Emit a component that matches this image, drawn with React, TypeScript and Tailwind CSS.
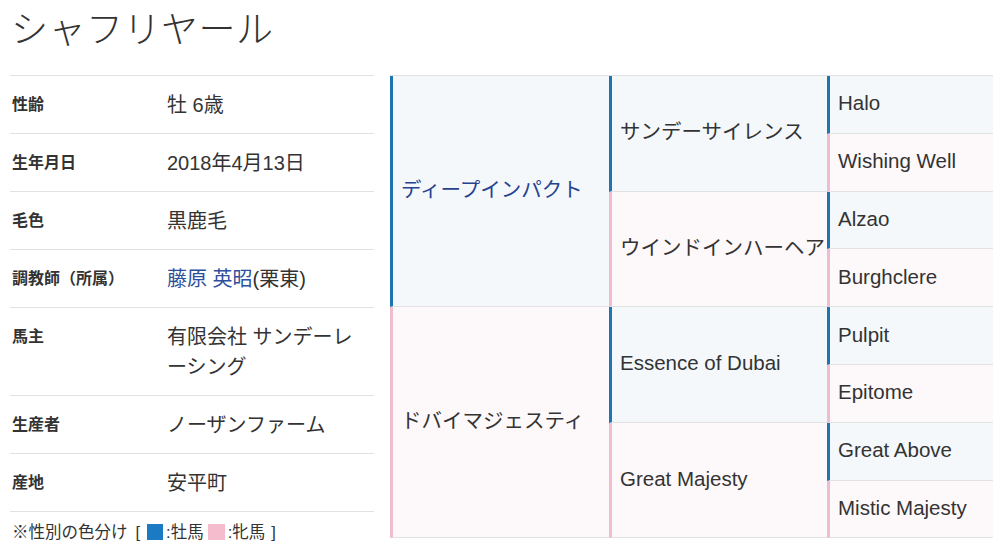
import React from "react";

type Sex = "m" | "f";

interface Horse {
    name: string;
    sex: Sex;
    link?: boolean;
}

const profile: { label: string; value: React.ReactNode }[] = [
    { label: "性齢", value: "牡 6歳" },
    { label: "生年月日", value: "2018年4月13日" },
    { label: "毛色", value: "黒鹿毛" },
    {
        label: "調教師（所属）",
        value: (
            <>
                <span className="text-[#2d4f9e]">藤原 英昭</span>(栗東)
            </>
        ),
    },
    { label: "馬主", value: "有限会社 サンデーレーシング" },
    { label: "生産者", value: "ノーザンファーム" },
    { label: "産地", value: "安平町" },
];

const gen1: Horse[] = [
    { name: "ディープインパクト", sex: "m", link: true },
    { name: "ドバイマジェスティ", sex: "f" },
];
const gen2: Horse[] = [
    { name: "サンデーサイレンス", sex: "m" },
    { name: "ウインドインハーヘア", sex: "f" },
    { name: "Essence of Dubai", sex: "m" },
    { name: "Great Majesty", sex: "f" },
];
const gen3: Horse[] = [
    { name: "Halo", sex: "m" },
    { name: "Wishing Well", sex: "f" },
    { name: "Alzao", sex: "m" },
    { name: "Burghclere", sex: "f" },
    { name: "Pulpit", sex: "m" },
    { name: "Epitome", sex: "f" },
    { name: "Great Above", sex: "m" },
    { name: "Mistic Majesty", sex: "f" },
];

function Cell({ horse, span, col }: { horse: Horse; span: string; col: string }) {
    const tone =
        horse.sex === "m"
            ? "bg-[#f4f8fb] border-l-[#1f74b2]"
            : "bg-[#fdf8f9] border-l-[#f0bdd0]";
    return (
        <div
            className={`${span} ${col} ${tone} border-l-[3px] border-b border-b-[#e2e2e2] flex items-center pl-[8px] pb-[2px] whitespace-nowrap overflow-hidden`}
        >
            <span className={horse.link ? "text-[#27438f]" : ""}>{horse.name}</span>
        </div>
    );
}

export default function App() {
    return (
        <div className="w-[1000px] h-[548px] bg-white overflow-hidden text-[#333] font-[family-name:'Liberation_Sans','Noto_Sans_CJK_JP',sans-serif]">
            <div className="h-[75px] pl-[11px] pt-[2px]">
                <h1 className="text-[37px] leading-[50px] font-light tracking-[0.5px] text-[#333] font-[family-name:'Noto_Sans_CJK_JP',sans-serif]">
                    シャフリヤール
                </h1>
            </div>

            <div className="flex gap-[16px] pl-[10px]">
                {/* profile table */}
                <div className="w-[364px]">
                    <div className="border-t border-[#e2e2e2]">
                        {profile.map((row) => (
                            <div
                                key={row.label}
                                className="flex border-b border-[#e2e2e2] pt-[14px] pb-[13px]"
                            >
                                <div className="w-[157px] pl-[2px] text-[16px] leading-[30px] font-bold">
                                    {row.label}
                                </div>
                                <div className="w-[207px] pr-[10px] text-[20px] leading-[30px]">
                                    {row.value}
                                </div>
                            </div>
                        ))}
                    </div>
                    <p className="pt-[10px] pl-[2px] text-[16.5px] leading-[20px] flex items-center whitespace-nowrap">
                        <span>※性別の色分け</span>
                        <span className="ml-[8px]">[</span>
                        <span className="inline-block w-[16px] h-[16px] bg-[#1a7bc4] ml-[7px]" />
                        <span className="ml-[3px]">:牡馬</span>
                        <span className="inline-block w-[17px] h-[16px] bg-[#f5bccd] ml-[4px]" />
                        <span className="ml-[3px]">:牝馬</span>
                        <span className="ml-[6px]">]</span>
                    </p>
                </div>

                {/* pedigree */}
                <div className="grid grid-cols-[219px_218px_166px] grid-rows-[repeat(8,57.8px)] border-t border-[#e2e2e2] text-[20.5px] leading-[26px]">
                    {gen1.map((h, i) => (
                        <Cell
                            key={h.name}
                            horse={h}
                            col="col-start-1"
                            span={i === 0 ? "row-start-1 row-span-4" : "row-start-5 row-span-4"}
                        />
                    ))}
                    {gen2.map((h, i) => (
                        <Cell
                            key={h.name}
                            horse={h}
                            col="col-start-2"
                            span={
                                [
                                    "row-start-1 row-span-2",
                                    "row-start-3 row-span-2",
                                    "row-start-5 row-span-2",
                                    "row-start-7 row-span-2",
                                ][i]
                            }
                        />
                    ))}
                    {gen3.map((h, i) => (
                        <Cell
                            key={h.name}
                            horse={h}
                            col="col-start-3"
                            span={
                                [
                                    "row-start-1",
                                    "row-start-2",
                                    "row-start-3",
                                    "row-start-4",
                                    "row-start-5",
                                    "row-start-6",
                                    "row-start-7",
                                    "row-start-8",
                                ][i]
                            }
                        />
                    ))}
                </div>
            </div>
        </div>
    );
}
